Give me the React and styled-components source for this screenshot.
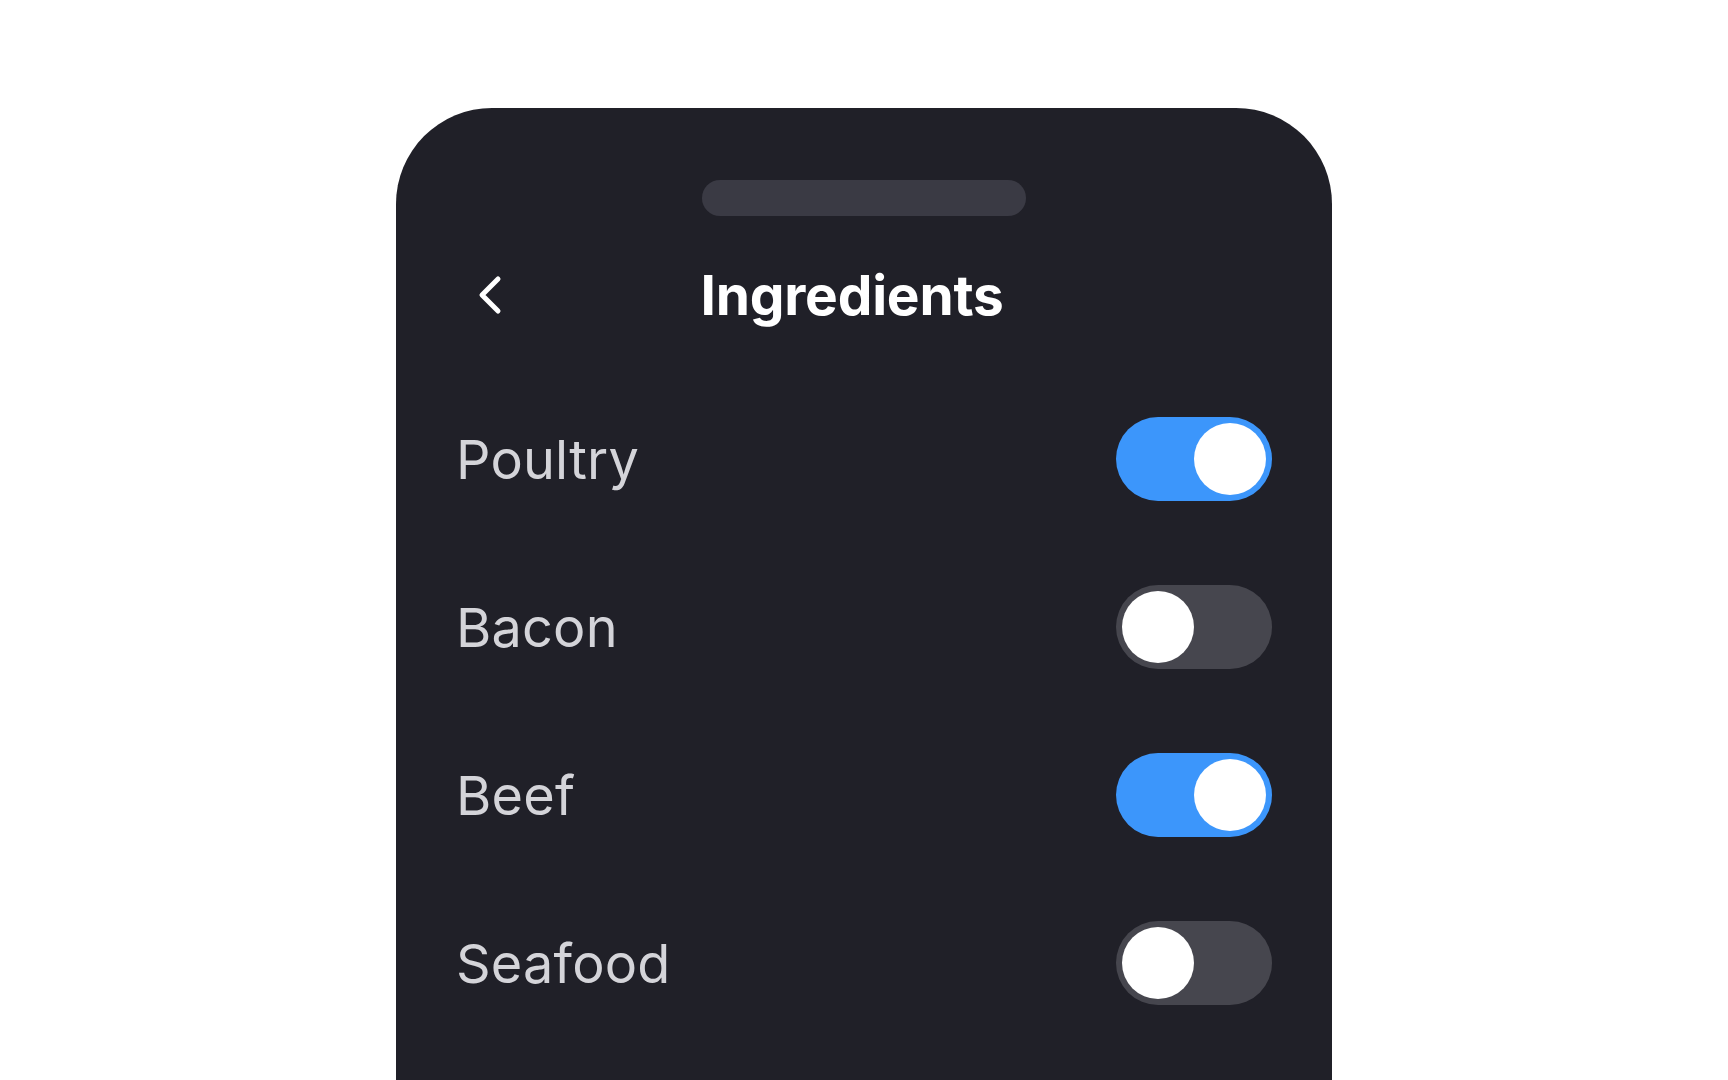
import React, { useState } from 'react';
import styled, { createGlobalStyle } from 'styled-components';

const GlobalStyle = createGlobalStyle`
  html, body {
    margin: 0;
    padding: 0;
    background: #ffffff;
    overflow: hidden;
  }
  body {
    font-family: 'Inter', 'Noto Sans', sans-serif;
  }
`;

const Page = styled.div`
  width: 1728px;
  height: 1080px;
  display: flex;
  justify-content: center;
  padding-top: 108px;
  box-sizing: border-box;
`;

const Sheet = styled.div`
  width: 936px;
  height: 972px;
  background: #202028;
  border-radius: 96px 96px 0 0;
  padding: 72px 60px 0 60px;
  box-sizing: border-box;
  display: flex;
  flex-direction: column;
`;

const Handle = styled.div`
  align-self: center;
  width: 324px;
  height: 36px;
  border-radius: 18px;
  background: #3a3a44;
`;

const Header = styled.div`
  margin-top: 37px;
  height: 84px;
  display: grid;
  grid-template-columns: 1fr auto 1fr;
  align-items: center;
`;

const BackButton = styled.button`
  justify-self: start;
  background: none;
  border: none;
  padding: 0;
  margin-left: 22px;
  display: flex;
  cursor: pointer;
`;

const Title = styled.h1`
  margin: 0 24px 0 0;
  font-size: 55px;
  font-weight: 700;
  color: #ffffff;
  letter-spacing: -0.2px;
`;

const List = styled.div`
  margin-top: 38px;
  display: flex;
  flex-direction: column;
`;

const Row = styled.div`
  height: 168px;
  display: flex;
  align-items: center;
  justify-content: space-between;
`;

const Label = styled.span`
  font-size: 54px;
  font-weight: 400;
  color: #d4d4d9;
  letter-spacing: 0.2px;
`;

const Track = styled.button`
  width: 156px;
  height: 84px;
  border-radius: 42px;
  border: none;
  padding: 6px;
  display: flex;
  justify-content: ${p => (p.$on ? 'flex-end' : 'flex-start')};
  background: ${p => (p.$on ? '#3c96fb' : '#46464e')};
  box-sizing: border-box;
  cursor: pointer;
`;

const Knob = styled.span`
  width: 72px;
  height: 72px;
  border-radius: 50%;
  background: #ffffff;
`;

const initial = [
  { name: 'Poultry', on: true },
  { name: 'Bacon', on: false },
  { name: 'Beef', on: true },
  { name: 'Seafood', on: false },
];

export default function App() {
  const [items, setItems] = useState(initial);

  function toggle(i) {
    setItems(items.map((it, j) => (j === i ? { ...it, on: !it.on } : it)));
  }

  return (
    <>
      <GlobalStyle />
      <Page>
        <Sheet>
          <Handle />
          <Header>
            <BackButton aria-label="Back">
              <svg width="26" height="42" viewBox="0 0 26 42" fill="none">
                <polyline
                  points="20,5 4,21 20,37"
                  stroke="#ffffff"
                  strokeWidth="5"
                  strokeLinecap="round"
                  strokeLinejoin="round"
                />
              </svg>
            </BackButton>
            <Title>Ingredients</Title>
            <span />
          </Header>
          <List>
            {items.map((it, i) => (
              <Row key={it.name}>
                <Label>{it.name}</Label>
                <Track $on={it.on} onClick={() => toggle(i)}>
                  <Knob />
                </Track>
              </Row>
            ))}
          </List>
        </Sheet>
      </Page>
    </>
  );
}
